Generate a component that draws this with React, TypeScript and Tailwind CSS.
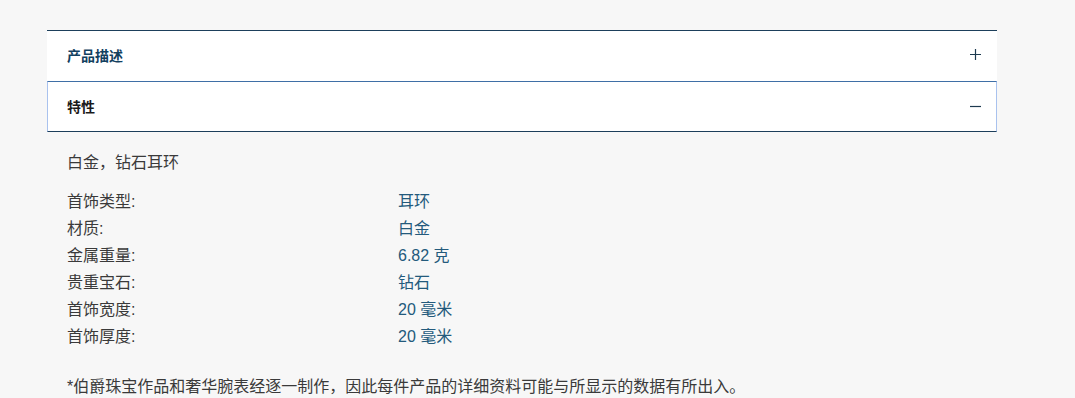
import React from 'react';

const specs: [string, string][] = [
  ['首饰类型:', '耳环'],
  ['材质:', '白金'],
  ['金属重量:', '6.82 克'],
  ['贵重宝石:', '钻石'],
  ['首饰宽度:', '20 毫米'],
  ['首饰厚度:', '20 毫米'],
];

function PlusIcon() {
  return (
    <svg width="13" height="13" viewBox="0 0 13 13" className="text-[#1d3a4f] -mt-[3px]">
      <path d="M6.5 1v11M1 6.5h11" stroke="currentColor" strokeWidth="1.2" />
    </svg>
  );
}

function MinusIcon() {
  return (
    <svg width="13" height="13" viewBox="0 0 13 13" className="text-[#1d3a4f] -mt-[1px]">
      <path d="M1 6.5h11" stroke="currentColor" strokeWidth="1.2" />
    </svg>
  );
}

export default function App() {
  return (
    <div className="min-h-screen bg-[#f7f7f7] pt-[30px] pl-[47px] font-['Liberation_Sans','Noto_Sans_CJK_SC',sans-serif]">
      <div className="w-[950px]">
        <div className="h-[51px] bg-white border-t border-[#1d3f5b] flex items-center justify-between pl-[20px] pr-[15px]">
          <span className="text-[14px] font-bold text-[#12405f]">产品描述</span>
          <PlusIcon />
        </div>

        <div className="h-[51px] bg-white border-t border-t-[#3f6fa6] border-x border-x-[#a9c2ee] border-b border-b-[#1d3f5b] flex items-center justify-between pl-[19px] pr-[14px]">
          <span className="text-[14px] font-bold text-[#1a1a1a] mt-[1px]">特性</span>
          <MinusIcon />
        </div>

        <div className="pl-[20px] pt-[19px] text-[#3a3a3a] text-[16px]">
          <p className="leading-[24px]">白金，钻石耳环</p>

          <div className="mt-[13px] grid grid-cols-[331px_1fr]">
            {specs.map(([label, value]) => (
              <React.Fragment key={label}>
                <div className="leading-[27px]">{label}</div>
                <div className="leading-[27px] text-[#235a7c]">{value}</div>
              </React.Fragment>
            ))}
          </div>

          <p className="mt-[25px] leading-[24px]">
            *伯爵珠宝作品和奢华腕表经逐一制作，因此每件产品的详细资料可能与所显示的数据有所出入。
          </p>
        </div>
      </div>
    </div>
  );
}
